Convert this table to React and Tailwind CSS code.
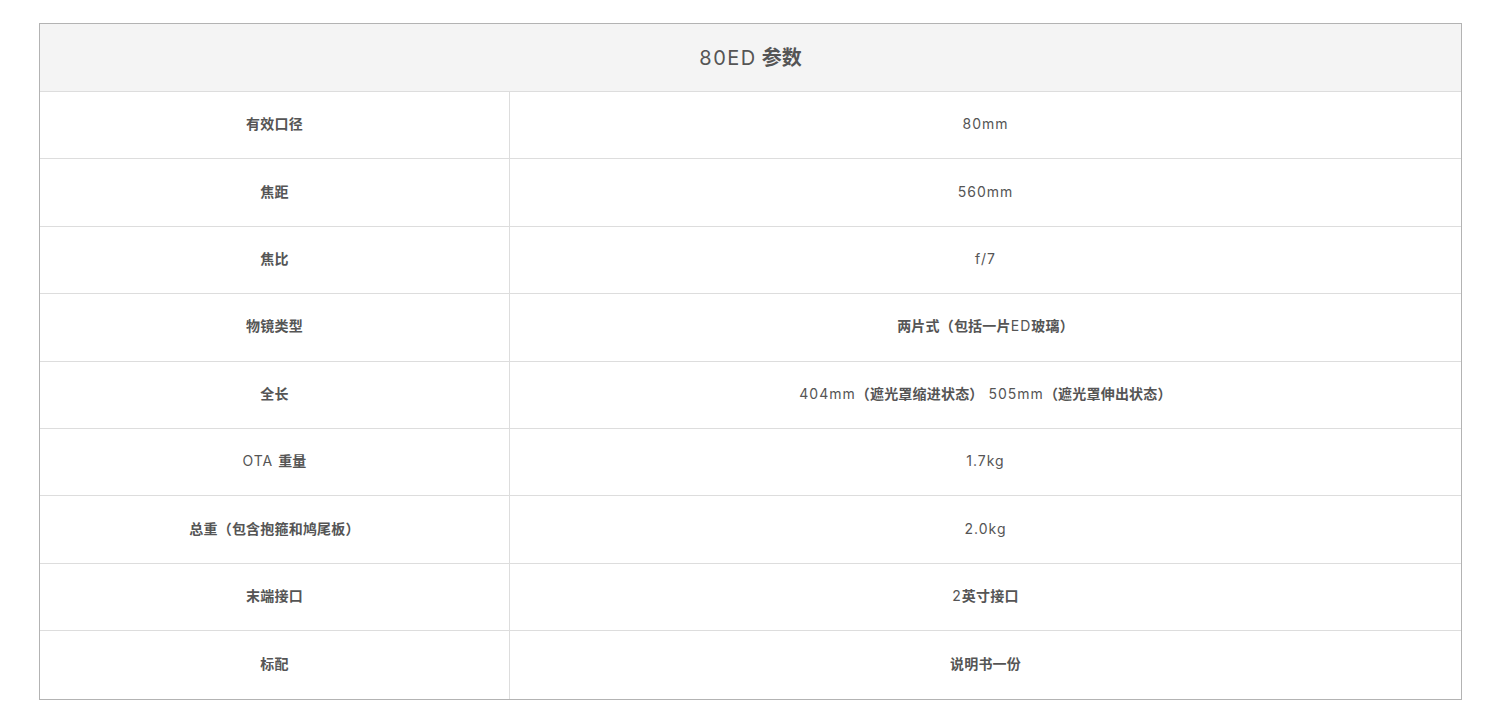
import React from "react";

const rows = [
  { label: [["有效口径", true]], value: [["80mm", false]] },
  { label: [["焦距", true]], value: [["560mm", false]] },
  { label: [["焦比", true]], value: [["f/7", false]] },
  {
    label: [["物镜类型", true]],
    value: [["两片式（包括一片", true], ["ED", false], ["玻璃）", true]],
  },
  {
    label: [["全长", true]],
    value: [
      ["404mm", false],
      ["（遮光罩缩进状态）", true],
      ["\u00a0505mm", false],
      ["（遮光罩伸出状态）", true],
    ],
  },
  { label: [["OTA\u00a0", false], ["重量", true]], value: [["1.7kg", false]] },
  { label: [["总重（包含抱箍和鸠尾板）", true]], value: [["2.0kg", false]] },
  { label: [["末端接口", true]], value: [["2", false], ["英寸接口", true]] },
  { label: [["标配", true]], value: [["说明书一份", true]] },
];

function Text({ parts }) {
  return (
    <span>
      {parts.map(([t, bold], i) => (
        <span key={i} className={bold ? "font-bold tracking-[0.2px]" : "font-normal tracking-[1px]"}>
          {t}
        </span>
      ))}
    </span>
  );
}

export default function App() {
  return (
    <div
      className="min-h-screen bg-white pt-[23px] pl-[39px] text-[#555]"
      style={{ fontFamily: '"Inter", "Noto Sans CJK SC", sans-serif' }}
    >
      <div className="w-[1423px] border border-[#b3b3b3]">
        <div className="h-[68px] bg-[#f4f4f4] flex items-center justify-center text-[20px] border-b border-[#ddd]">
          <span className="font-normal tracking-[1.5px]">80ED</span>
          <span className="font-bold ml-[5px]">参数</span>
        </div>
        {rows.map((r, i) => (
          <div
            key={i}
            className={
              "grid grid-cols-[470px_1fr] h-[67.4px] text-[14px]" +
              (i < rows.length - 1 ? " border-b border-[#ddd]" : "")
            }
          >
            <div className="flex items-center justify-center pb-[3px] border-r border-[#ddd]">
              <Text parts={r.label} />
            </div>
            <div className="flex items-center justify-center pb-[3px]">
              <Text parts={r.value} />
            </div>
          </div>
        ))}
      </div>
    </div>
  );
}
